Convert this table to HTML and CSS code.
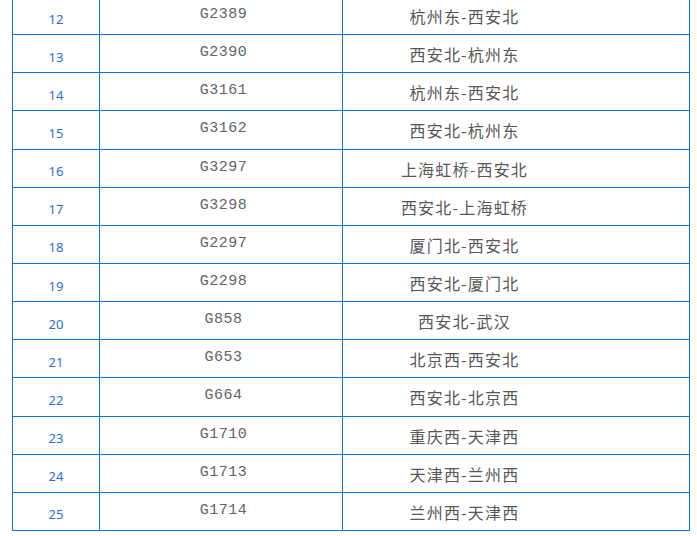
FILE: index.html
```html
<!DOCTYPE html>
<html lang="zh">
<head>
<meta charset="utf-8">
<link rel="stylesheet" href="styles.css">
</head>
<body>
<div class="wrap">
<table class="trains">
<colgroup><col class="c-num"><col class="c-code"><col class="c-route"></colgroup>
<tbody>
<tr><td class="num">12</td><td class="code">G2389</td><td class="route">杭州东-西安北</td></tr>
<tr><td class="num">13</td><td class="code">G2390</td><td class="route">西安北-杭州东</td></tr>
<tr><td class="num">14</td><td class="code">G3161</td><td class="route">杭州东-西安北</td></tr>
<tr><td class="num">15</td><td class="code">G3162</td><td class="route">西安北-杭州东</td></tr>
<tr><td class="num">16</td><td class="code">G3297</td><td class="route">上海虹桥-西安北</td></tr>
<tr><td class="num">17</td><td class="code">G3298</td><td class="route">西安北-上海虹桥</td></tr>
<tr><td class="num">18</td><td class="code">G2297</td><td class="route">厦门北-西安北</td></tr>
<tr><td class="num">19</td><td class="code">G2298</td><td class="route">西安北-厦门北</td></tr>
<tr><td class="num">20</td><td class="code">G858</td><td class="route">西安北-武汉</td></tr>
<tr><td class="num">21</td><td class="code">G653</td><td class="route">北京西-西安北</td></tr>
<tr><td class="num">22</td><td class="code">G664</td><td class="route">西安北-北京西</td></tr>
<tr><td class="num">23</td><td class="code">G1710</td><td class="route">重庆西-天津西</td></tr>
<tr><td class="num">24</td><td class="code">G1713</td><td class="route">天津西-兰州西</td></tr>
<tr><td class="num">25</td><td class="code">G1714</td><td class="route">兰州西-天津西</td></tr>
</tbody>
</table>
</div>
</body>
</html>
```
FILE: styles.css
```css
html, body {
  margin: 0;
  padding: 0;
  background: #ffffff;
}
body {
  overflow: hidden;
  height: 536px;
}
.wrap {
  padding-left: 12px;
  margin-top: -4px;
}
.trains {
  border-collapse: collapse;
  table-layout: fixed;
  width: 677px;
}
.c-num { width: 87px; }
.c-code { width: 243px; }
.c-route { width: 347px; }
.trains tr {
  height: 38.15px;
}
.trains td {
  border: 1px solid #0e73d6;
  padding: 0;
  text-align: center;
  vertical-align: middle;
}
.num {
  font-family: "Noto Sans", "Liberation Sans", sans-serif;
  font-size: 13px;
  color: #2c6ee0;
  padding-top: 6px !important;
}
.code {
  font-family: "Liberation Mono", "DejaVu Sans Mono", monospace;
  font-size: 15px;
  letter-spacing: 0.5px;
  color: #646464;
  padding-left: 5px !important;
  padding-bottom: 2px !important;
}
.route {
  font-family: "Noto Sans CJK SC", "Noto Sans", sans-serif;
  font-size: 16px;
  letter-spacing: 1.2px;
  color: #575757;
  padding-right: 103px !important;
  padding-top: 1px !important;
}
```
